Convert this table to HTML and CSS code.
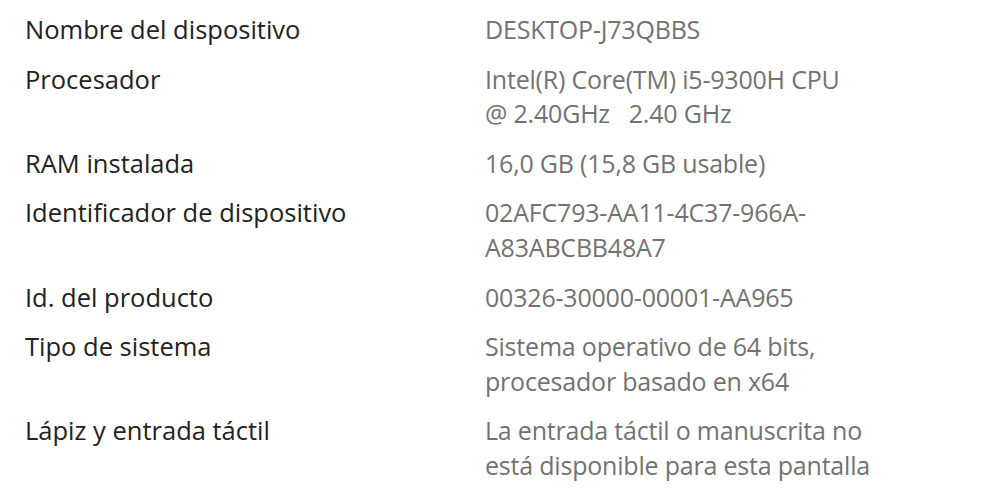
FILE: index.html
```html
<!DOCTYPE html>
<html lang="es">
<head>
    <title>Especificaciones del dispositivo</title>
    <link rel="stylesheet" href="styles.css">
</head>
<body>
    <div class="specs">
        <div class="row">
            <span class="label">Nombre del dispositivo</span>
            <span class="value">DESKTOP-J73QBBS</span>
        </div>
        <div class="row">
            <span class="label">Procesador</span>
            <span class="value">Intel(R) Core(TM) i5-9300H CPU<br>@ 2.40GHz &nbsp; 2.40 GHz</span>
        </div>
        <div class="row">
            <span class="label">RAM instalada</span>
            <span class="value">16,0 GB (15,8 GB usable)</span>
        </div>
        <div class="row">
            <span class="label">Identificador de dispositivo</span>
            <span class="value">02AFC793-AA11-4C37-966A-<br>A83ABCBB48A7</span>
        </div>
        <div class="row">
            <span class="label">Id. del producto</span>
            <span class="value">00326-30000-00001-AA965</span>
        </div>
        <div class="row">
            <span class="label">Tipo de sistema</span>
            <span class="value">Sistema operativo de 64 bits,<br>procesador basado en x64</span>
        </div>
        <div class="row">
            <span class="label">Lápiz y entrada táctil</span>
            <span class="value">La entrada táctil o manuscrita no<br>está disponible para esta pantalla</span>
        </div>
    </div>
</body>
</html>
```

FILE: styles.css
```css
* {
    margin: 0;
    padding: 0;
    box-sizing: border-box;
    font-family: 'Open Sans', sans-serif;
}

body {
    background: #ffffff;
    padding: 12px 0 0 25px;
}

.specs {
    display: flex;
    flex-direction: column;
    gap: 15px;
}

.row {
    display: grid;
    grid-template-columns: 460px 1fr;
    font-size: 25px;
    line-height: 34.6px;
}

.label {
    color: #222222;
    font-size: 25.5px;
}

.value {
    color: #727272;
    letter-spacing: -0.2px;
}
```
